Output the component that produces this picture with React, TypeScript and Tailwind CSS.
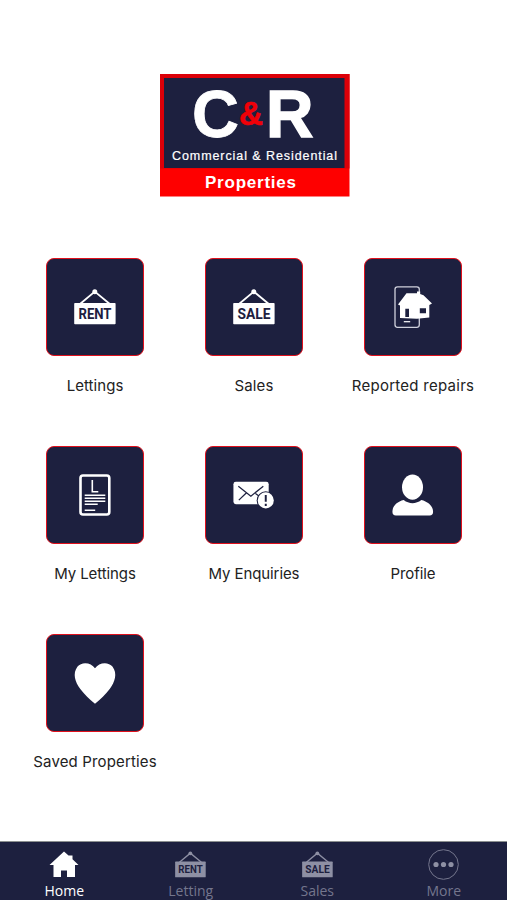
import type { ReactNode } from 'react';

const NAVY = '#1d203f';

function Logo() {
  return (
    <svg width="190" height="123" viewBox="0 0 190 123" fontFamily="'Liberation Sans', Arial, sans-serif" fontWeight="700">
      <rect width="189.5" height="122.5" fill="#fe0000" />
      <rect x="0" y="0" width="189.5" height="94.5" fill="#dc0008" />
      <rect x="4" y="4" width="180.5" height="90" fill={NAVY} />
      <text x="32" y="63" fontSize="67" fill="#fff" stroke="#fff" strokeWidth="0.8" textLength="47" lengthAdjust="spacingAndGlyphs">C</text>
      <text x="79" y="50.5" fontSize="34" fill="#f00008" stroke="#f00008" strokeWidth="0.6" textLength="24" lengthAdjust="spacingAndGlyphs">&amp;</text>
      <text x="106" y="62.5" fontSize="67" fill="#fff" stroke="#fff" strokeWidth="1.4" textLength="47.5" lengthAdjust="spacingAndGlyphs">R</text>
      <text x="12" y="85.5" fontSize="12.5" fontWeight="400" fill="#fff" stroke="#fff" strokeWidth="0.2" textLength="165">Commercial &amp; Residential</text>
      <text x="45" y="114" fontSize="17" fill="#fff" textLength="91">Properties</text>
    </svg>
  );
}

function SignIcon({ word, className }: { word: string; className: string }) {
  return (
    <svg className={className} viewBox="0 0 42 36" fill="currentColor">
      <path d="M6 15 20.8 2.6 35.8 15" fill="none" stroke="currentColor" strokeWidth="1.8" />
      <circle cx="20.8" cy="2.8" r="2.5" />
      <rect x="0.2" y="14" width="41.4" height="21.3" rx="0.8" />
      <text
        x="21"
        y="29.6"
        textAnchor="middle"
        textLength="33"
        lengthAdjust="spacingAndGlyphs"
        fontFamily="Roboto, sans-serif"
        fontWeight="700"
        fontSize="13.8"
        fill={NAVY}
      >
        {word}
      </text>
    </svg>
  );
}

function RepairsIcon() {
  return (
    <svg className="size-full" viewBox="0 0 96 96" fill="none">
      <rect x="30" y="27.8" width="24.3" height="40.5" rx="2.5" stroke="#cfd0dc" strokeWidth="1.3" />
      <path d="M33 45.5 41.5 34.2H52v-1.7h3.2V35l3.3 1.2 8.5 8.3-2.7 1.5v12.5L52 59.8 35 59V46.5z" fill="#fff" />
      <path d="M40.3 49.7H44V58h-3.700zM54.8 49.2H61v5h-6.200z" fill={NAVY} />
      <path d="M38.8 62.7h6.4" stroke="#fff" strokeWidth="1.2" />
    </svg>
  );
}

function TenancyIcon() {
  return (
    <svg className="size-full" viewBox="0 0 96 96" fill="none" stroke="#fff">
      <rect x="33.5" y="28.5" width="28.8" height="39" rx="2.5" strokeWidth="2.6" />
      <path d="M45.3 33v11.7h6" strokeWidth="1.6" />
      <path d="M37.7 48.3h20.6M37.7 51.3h20.6M37.7 54.3h20.6M37.7 57.3h13M37.7 63.3h10.5" strokeWidth="1.5" />
    </svg>
  );
}

function EnquiryIcon() {
  return (
    <svg className="size-full" viewBox="0 0 98 98" fill="none">
      <rect x="28" y="35.5" width="36" height="23" rx="2.5" fill="#fff" />
      <path d="m33 40 12.8 10.2L58.5 40M33.5 54.2l7.6-7.2M50.5 47.5l3.5 2.5" stroke={NAVY} strokeWidth="1.3" />
      <circle cx="61" cy="54.5" r="9.3" fill={NAVY} />
      <circle cx="61" cy="54.5" r="8.2" fill="#fff" />
      <path d="M61 49v7M61 58v2.2" stroke={NAVY} strokeWidth="2" />
    </svg>
  );
}

function ProfileIcon() {
  return (
    <svg className="size-full" viewBox="0 0 98 98" fill="#fff">
      <ellipse cx="48.5" cy="41" rx="10.7" ry="12.9" />
      <path d="M39.5 54.2c5.5 4.3 12.500 4.300 18 0 6.500 1.500 12 6 12 12 0 2.700-1.200 3.800-3.500 3.800h-34.500c-2.300 0-3.500-1.100-3.500-3.800 0-6 5-10.500 11.500-12z" />
    </svg>
  );
}

function HeartIcon() {
  return (
    <svg className="size-full" viewBox="0 0 98 98" fill="#fff">
      <path d="M49 34C45 28 35.5 26.8 31 32.5 26 39.5 28.5 48 34 55c4.500 5.800 9 10.200 15 15.200 6-5 10.500-9.400 15-15.200 5.500-7 8-15.500 3-22.500C62.500 26.800 53 28 49 34z" />
    </svg>
  );
}

interface TileProps {
  label: string;
  labelClass: string;
  children: ReactNode;
}

function Tile({ label, labelClass, children }: TileProps) {
  return (
    <button type="button" className="flex h-[188px] flex-col items-center">
      <span className="flex size-[98px] items-center justify-center rounded-[8px] border border-[#e0101c] bg-[#1d203f] text-white">
        {children}
      </span>
      <span className={`mt-[18px] whitespace-nowrap font-[Inter,sans-serif] text-[15px] leading-6 text-[#222] ${labelClass}`}>{label}</span>
    </button>
  );
}

function NavItem({ label, active, children }: { label: string; active?: boolean; children: ReactNode }) {
  return (
    <button type="button" className={`flex flex-1 flex-col items-center justify-start ${active ? 'text-white' : 'text-[#8e90a4]'}`}>
      <span className="flex h-[38px] shrink-0 items-center justify-center pt-[7px]">{children}</span>
      <span className={`mt-px font-['Open_Sans','Noto_Sans',sans-serif] text-[14px] leading-5 ${active ? '' : 'text-[#74768d]'}`}>{label}</span>
    </button>
  );
}

export default function App() {
  return (
    <div className="flex h-[900px] w-[507px] flex-col overflow-hidden bg-white">
      <header className="flex justify-center pl-[2px] pt-[74px]">
        <Logo />
      </header>

      <main className="grid flex-1 grid-cols-[repeat(3,159px)] content-start pl-[15.5px] pt-[61px]">
        <Tile label="Lettings" labelClass="tracking-[0.05px]">
          <SignIcon word="RENT" className="h-9 w-[42px]" />
        </Tile>
        <Tile label="Sales" labelClass="tracking-[0.1px]">
          <SignIcon word="SALE" className="h-9 w-[42px]" />
        </Tile>
        <Tile label="Reported repairs" labelClass="tracking-[0.27px]">
          <RepairsIcon />
        </Tile>
        <Tile label="My Lettings" labelClass="tracking-[-0.1px]">
          <TenancyIcon />
        </Tile>
        <Tile label="My Enquiries" labelClass="tracking-[-0.1px]">
          <EnquiryIcon />
        </Tile>
        <Tile label="Profile" labelClass="tracking-[-0.1px]">
          <ProfileIcon />
        </Tile>
        <Tile label="Saved Properties" labelClass="tracking-[0.15px]">
          <HeartIcon />
        </Tile>
      </main>

      <nav className="flex h-[59px] border-t border-[#8c9090] bg-[#1d203f] pl-px">
        <NavItem label="Home" active>
          <svg className="h-[27px] w-[30px]" viewBox="0 0 30 27" fill="currentColor">
            <path d="M15 .5 19.5 4.600H23.500V8.300L29.500 14H26V26H18V19.500H12V26H4.500V14H.5z" />
          </svg>
        </NavItem>
        <NavItem label="Letting">
          <SignIcon word="RENT" className="h-[27px] w-[31px]" />
        </NavItem>
        <NavItem label="Sales">
          <SignIcon word="SALE" className="h-[27px] w-[31px]" />
        </NavItem>
        <NavItem label="More">
          <svg className="size-[31px]" viewBox="0 0 31 31" fill="currentColor">
            <circle cx="15.5" cy="15.5" r="14.8" fill="none" stroke="#74768d" />
            <circle cx="8" cy="15.5" r="2.6" />
            <circle cx="15.5" cy="15.5" r="2.6" />
            <circle cx="23" cy="15.5" r="2.6" />
          </svg>
        </NavItem>
      </nav>
    </div>
  );
}
